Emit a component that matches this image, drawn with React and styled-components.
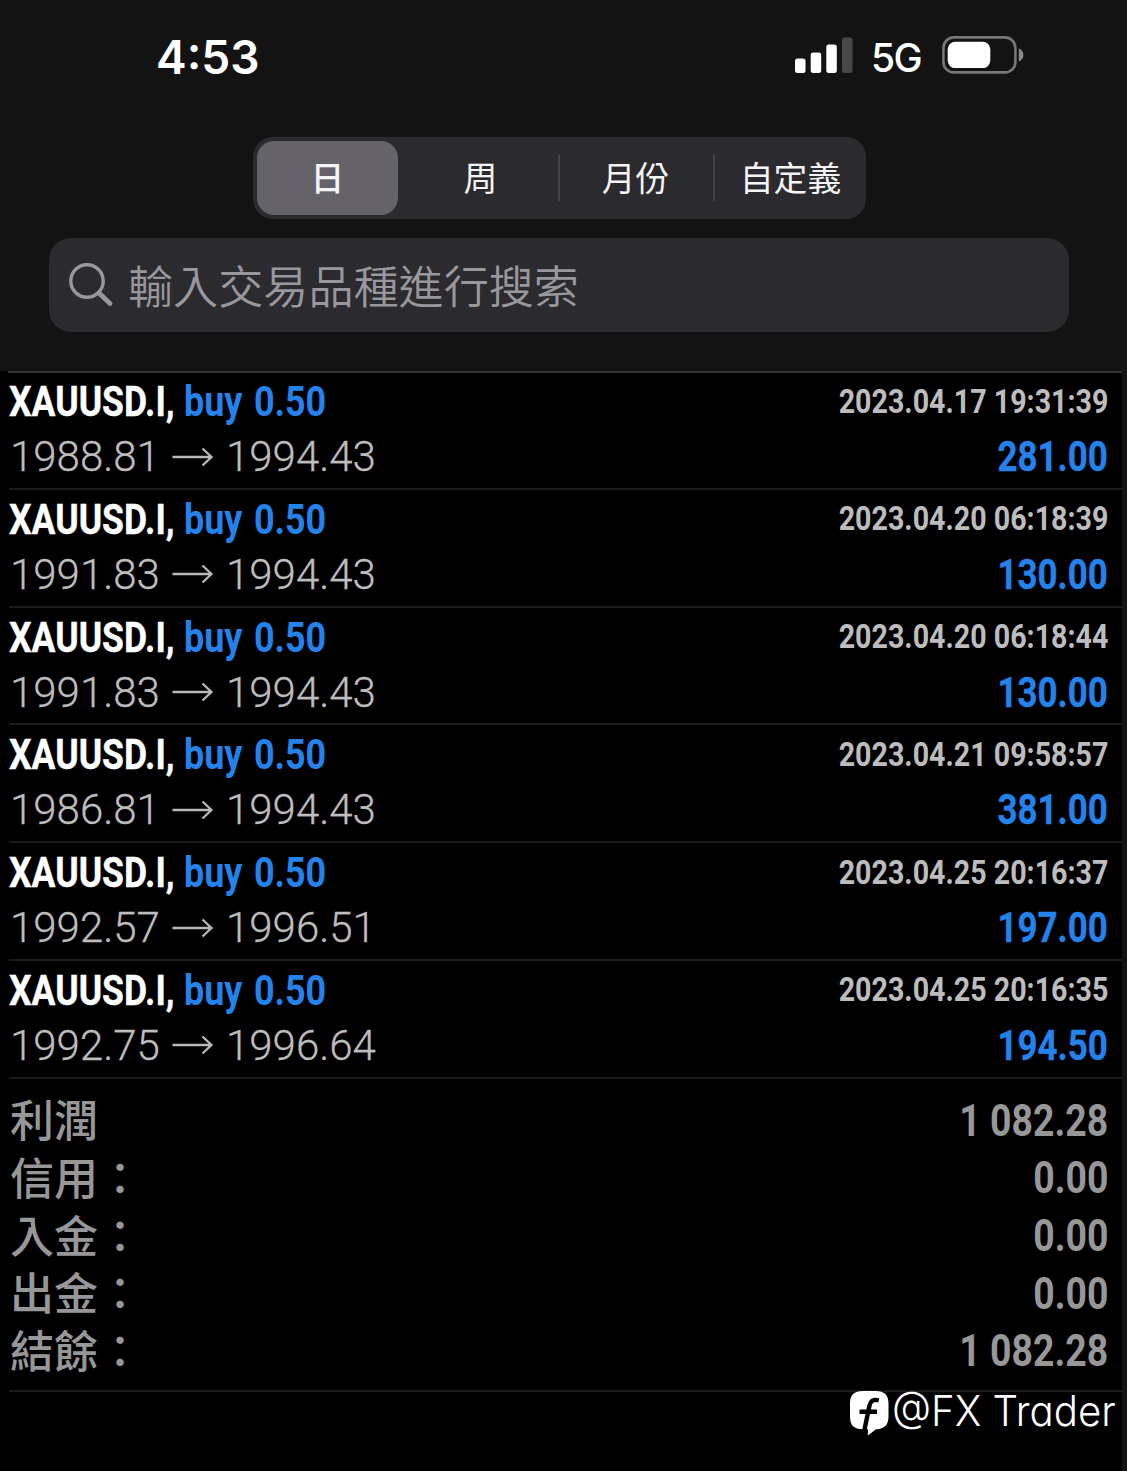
import React from "react";
import styled, { createGlobalStyle } from "styled-components";

const ranges = ["日", "周", "月份", "自定義"];

const deals = [
    { open: "1988.81", close: "1994.43", time: "2023.04.17 19:31:39", profit: "281.00" },
    { open: "1991.83", close: "1994.43", time: "2023.04.20 06:18:39", profit: "130.00" },
    { open: "1991.83", close: "1994.43", time: "2023.04.20 06:18:44", profit: "130.00" },
    { open: "1986.81", close: "1994.43", time: "2023.04.21 09:58:57", profit: "381.00" },
    { open: "1992.57", close: "1996.51", time: "2023.04.25 20:16:37", profit: "197.00" },
    { open: "1992.75", close: "1996.64", time: "2023.04.25 20:16:35", profit: "194.50" },
];

const totals = [
    { label: "利潤", value: "1 082.28" },
    { label: "信用：", value: "0.00" },
    { label: "入金：", value: "0.00" },
    { label: "出金：", value: "0.00" },
    { label: "結餘：", value: "1 082.28" },
];

const SignalIcon = () => (
    <svg width="58" height="38" viewBox="0 0 58 38" fill="#fff">
        <rect x="0" y="22.5" width="10.5" height="14.5" rx="2.5" />
        <rect x="15.7" y="16.5" width="10.5" height="20.5" rx="2.5" />
        <rect x="31.3" y="8.5" width="10.5" height="28.5" rx="2.5" />
        <rect x="47" y="1.5" width="10.5" height="35.5" rx="2.5" fill="#474747" />
    </svg>
);

const BatteryIcon = () => (
    <svg width="82" height="38" viewBox="0 0 82 38">
        <rect x="1.4" y="1.4" width="72" height="35" rx="10.5" fill="none" stroke="#777" strokeWidth="2.6" />
        <rect x="5.7" y="5.7" width="42.6" height="26.4" rx="7.5" fill="#fff" />
        <path d="M76.8 12.5c2.8 1 4.6 3.5 4.6 6.5s-1.8 5.5-4.6 6.5z" fill="#8a8a8a" />
    </svg>
);

const SearchIcon = () => (
    <svg width="46" height="46" viewBox="0 0 46 46" fill="none" stroke="#98979d">
        <circle cx="19" cy="19" r="16.2" strokeWidth="3.4" />
        <path d="M31 31l11 10.5" strokeWidth="4.8" strokeLinecap="round" />
    </svg>
);

const ArrowIcon = () => (
    <svg width="42" height="20" viewBox="0 0 42 20" fill="none" stroke="#b9b9b9" strokeWidth="2.3">
        <path d="M0.5 10H39M30.5 1.5L39.5 10l-9 8.5" />
    </svg>
);

const BrandIcon = () => (
    <svg width="39" height="45" viewBox="0 0 39 45">
        <path d="M13 0h12.5c9 0 13 4 13 12.5v13c0 8.5-4 12.5-12.5 12.8L17.8 44.5 18 38.3h-5C4 38.3 0 34.3 0 25.5v-13C0 4 4 0 13 0z" fill="#fff" />
        <path
            d="M28.8 9.3c-6-1.3-8.6.9-9.3 5.2L14.4 39M9.5 20.7h17.5"
            fill="none"
            stroke="#000"
            strokeWidth="4.4"
        />
    </svg>
);

const App = () => (
    <Screen>
        <GlobalStyle />
        <Header>
            <StatusBar>
                <Clock>4:53</Clock>
                <StatusIcons>
                    <SignalIcon />
                    <Network>5G</Network>
                    <BatteryIcon />
                </StatusIcons>
            </StatusBar>
            <Segments>
                {ranges.map((range, index) => (
                    <Segment key={range} $active={index === 0} $divider={index > 1}>
                        {range}
                    </Segment>
                ))}
            </Segments>
            <SearchField>
                <SearchIcon />
                <Placeholder>輸入交易品種進行搜索</Placeholder>
            </SearchField>
        </Header>
        <Content>
            <Divider />
            {deals.map((deal) => (
                <DealRow key={deal.time}>
                    <Line>
                        <Title>
                            <Symbol>XAUUSD.I,</Symbol>
                            <Side>buy 0.50</Side>
                        </Title>
                        <Time>{deal.time}</Time>
                    </Line>
                    <Line>
                        <Prices>
                            <Price $first>{deal.open}</Price>
                            <ArrowIcon />
                            <Price>{deal.close}</Price>
                        </Prices>
                        <Profit>{deal.profit}</Profit>
                    </Line>
                </DealRow>
            ))}
            <Totals>
                {totals.map((total) => (
                    <TotalRow key={total.label}>
                        <TotalLabel>{total.label}</TotalLabel>
                        <TotalValue>{total.value}</TotalValue>
                    </TotalRow>
                ))}
            </Totals>
            <Watermark>
                <BrandIcon />
                <Handle>@FX Trader</Handle>
            </Watermark>
        </Content>
    </Screen>
);

export default App;

const GlobalStyle = createGlobalStyle`
    body {
        margin: 0;
        background: #131313;
    }

    * {
        box-sizing: border-box;
    }

    svg {
        display: block;
        flex: none;
    }
`;

const cjk = `"Noto Sans CJK TC", "Noto Sans", sans-serif`;
const numeric = `Roboto, "Liberation Sans", sans-serif`;

const Screen = styled.div`
    display: flex;
    flex-direction: column;
    width: 1127px;
    height: 1471px;
    overflow: hidden;
    background: #131313;
    white-space: nowrap;
`;

const Header = styled.header`
    display: flex;
    flex-direction: column;
    height: 371px;
    flex: none;
`;

const StatusBar = styled.div`
    display: flex;
    justify-content: space-between;
    height: 137px;
    padding: 36px 103px 0 156px;
    color: #fff;
    font-family: Inter, sans-serif;
`;

const Clock = styled.span`
    font-size: 46px;
    font-weight: 600;
    line-height: 42px;
`;

const StatusIcons = styled.div`
    display: flex;
    align-items: flex-start;
`;

const Network = styled.span`
    width: 89px;
    padding-left: 18px;
    font-size: 39px;
    font-weight: 500;
    line-height: 44px;
    letter-spacing: -1.5px;
`;

const Segments = styled.div`
    display: flex;
    align-items: center;
    width: 613px;
    height: 82px;
    margin-left: 253px;
    padding-left: 4px;
    border-radius: 20px;
    background: #2b2a2e;
`;

const Segment = styled.div`
    display: flex;
    flex: none;
    align-items: center;
    justify-content: center;
    width: ${({ $active }) => ($active ? "141px" : "155px")};
    height: ${({ $active }) => ($active ? "74px" : "46px")};
    margin-right: ${({ $active }) => ($active ? "5px" : "0")};
    padding: 0 ${({ $divider }) => ($divider ? "2px" : "0")} 2px 0;
    border-left: ${({ $divider }) => ($divider ? "2px solid #444347" : "none")};
    border-radius: ${({ $active }) => ($active ? "17px" : "0")};
    background: ${({ $active }) => ($active ? "#656369" : "none")};
    color: #f4f4f6;
    font-family: ${cjk};
    font-size: 33.8px;
    font-weight: ${({ $active }) => ($active ? 500 : 400)};
    line-height: 44px;
`;

const SearchField = styled.div`
    display: flex;
    align-items: center;
    gap: 14px;
    width: 1020px;
    height: 94px;
    margin: 19px 0 0 49px;
    padding-left: 19px;
    border-radius: 22px;
    background: #2b2a2e;
`;

const Placeholder = styled.span`
    color: #98979d;
    font-family: ${cjk};
    font-size: 45.1px;
    font-weight: 350;
    line-height: 60px;
`;

const Content = styled.main`
    flex: 1;
    width: 1122px;
    background: #000;
`;

const Divider = styled.div`
    height: 2px;
    margin: 0 0 -1px 8px;
    background: #333;
`;

const DealRow = styled.section`
    height: 117.8px;
    margin-left: 9px;
    padding: 2px 14px 0 0;
    border-bottom: 2px solid #1b1b1b;
`;

const Line = styled.div`
    display: flex;
    align-items: center;
    justify-content: space-between;
    height: 55px;
`;

const Condensed = styled.span`
    font-family: ${numeric};
    font-size: 42px;
    font-weight: 700;
    transform: scaleX(${({ $scale }) => $scale});
    transform-origin: ${({ $right }) => ($right ? "right" : "left")} center;
`;

const Title = styled.div`
    display: flex;
`;

const Symbol = styled(Condensed).attrs({ $scale: 0.847 })`
    width: 175px;
    color: #fff;
    -webkit-text-stroke: 0.4px #fff;
`;

const Side = styled(Condensed).attrs({ $scale: 0.855 })`
    color: #2482ea;
    word-spacing: 3px;
`;

const Time = styled(Condensed).attrs({ $scale: 0.842, $right: true })`
    padding-bottom: 2px;
    color: #bdbdbd;
    font-size: 34px;
    line-height: 38px;
`;

const Prices = styled.div`
    display: flex;
    align-items: center;
    gap: 12px;
`;

const Price = styled.span`
    width: ${({ $first }) => ($first ? "151px" : "auto")};
    padding-left: ${({ $first }) => ($first ? "1px" : "0")};
    color: #bdbdbd;
    font-family: ${numeric};
    font-size: 42px;
    font-weight: 300;
    -webkit-text-stroke: 0.3px #bdbdbd;
`;

const Profit = styled(Condensed).attrs({ $scale: 0.83, $right: true })`
    color: #2482ea;
    -webkit-text-stroke: 0.4px #2482ea;
`;

const Totals = styled.section`
    height: 313px;
    margin-left: 9px;
    padding: 13px 14px 0 0;
    border-bottom: 2px solid #1b1b1b;
`;

const TotalRow = styled.div`
    display: flex;
    align-items: center;
    justify-content: space-between;
    height: 57.7px;
    color: #979797;
`;

const TotalLabel = styled.span`
    padding: 0 0 5px 1px;
    font-family: ${cjk};
    font-size: 44px;
    font-weight: 500;
    line-height: 52px;
`;

const TotalValue = styled(Condensed).attrs({ $scale: 0.85, $right: true })`
    font-size: 44px;
`;

const Watermark = styled.footer`
    display: flex;
    gap: 3px;
    margin: -1px 0 0 850px;
`;

const Handle = styled.span`
    color: #fff;
    font-family: Inter, sans-serif;
    font-size: 42.5px;
    font-weight: 300;
    font-feature-settings: "cv11";
    line-height: 40px;
    transform: scaleX(0.945);
    transform-origin: left center;
`;
